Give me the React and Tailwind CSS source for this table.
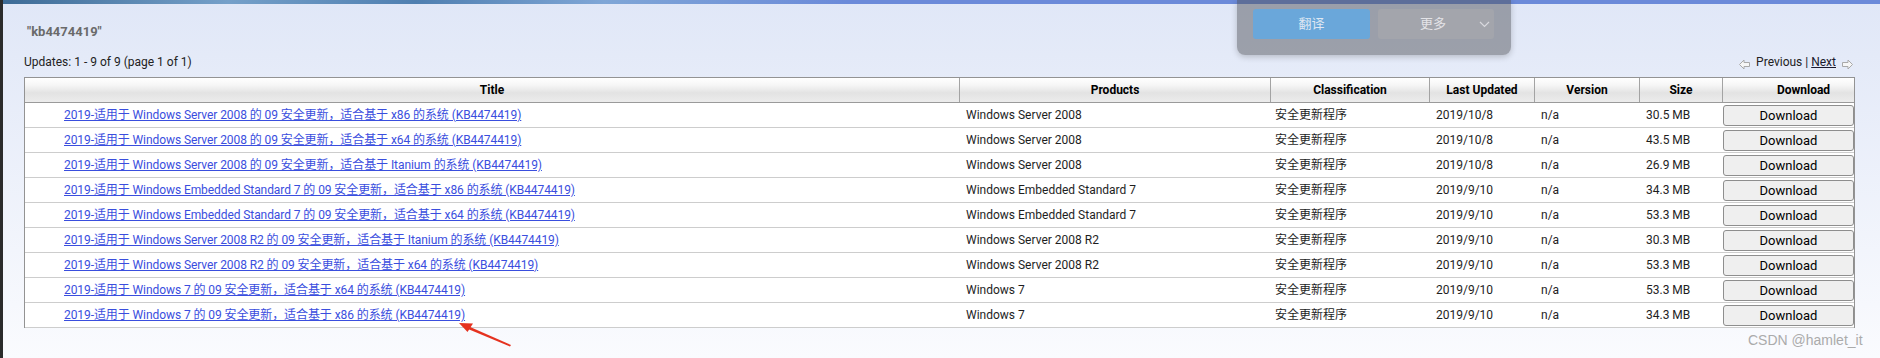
const rows = [
  { prod: "Windows Server 2008", arch: "x86", date: "2019/10/8", size: "30.5 MB" },
  { prod: "Windows Server 2008", arch: "x64", date: "2019/10/8", size: "43.5 MB" },
  { prod: "Windows Server 2008", arch: "Itanium", date: "2019/10/8", size: "26.9 MB" },
  { prod: "Windows Embedded Standard 7", arch: "x86", date: "2019/9/10", size: "34.3 MB" },
  { prod: "Windows Embedded Standard 7", arch: "x64", date: "2019/9/10", size: "53.3 MB" },
  { prod: "Windows Server 2008 R2", arch: "Itanium", date: "2019/9/10", size: "30.3 MB" },
  { prod: "Windows Server 2008 R2", arch: "x64", date: "2019/9/10", size: "53.3 MB" },
  { prod: "Windows 7", arch: "x64", date: "2019/9/10", size: "53.3 MB" },
  { prod: "Windows 7", arch: "x86", date: "2019/9/10", size: "34.3 MB" },
];

const cols = "grid grid-cols-[935px_311px_159px_105px_105px_83px_131px]";

function LeftArrow() {
  return (
    <svg width="11" height="11" viewBox="0 0 11 11" className="mt-[5px]">
      <polygon points="0.5,5.5 5,1 5,3.5 10.5,3.5 10.5,7.5 5,7.5 5,10" fill="#f6f6f6" stroke="#a9a9a9" strokeWidth="1" />
    </svg>
  );
}
function RightArrow() {
  return (
    <svg width="11" height="11" viewBox="0 0 11 11" className="mt-[5px]">
      <polygon points="10.5,5.5 6,1 6,3.5 0.5,3.5 0.5,7.5 6,7.5 6,10" fill="#f6f6f6" stroke="#a9a9a9" strokeWidth="1" />
    </svg>
  );
}

export default function App() {
  return (
    <div className="relative flex h-[358px] w-[1880px] overflow-hidden font-['Roboto','Noto_Sans_CJK_SC',sans-serif]">
      <div className="w-[3px] shrink-0 bg-[#2b2b2b]" />
      <div className="flex flex-1 flex-col bg-gradient-to-b from-[#e0e7f7] to-[#fafbfe]">
        <div className="h-[4px] bg-[linear-gradient(90deg,#3d6b96_0%,#75a0c9_12%,#4f7fb0_22%,#7fa6d6_32%,#6b8ad9_45%,#6b8ad9_100%)]" />
        <div className="pl-[21px] pr-[25px]">
          <div className="mt-[20px] pl-[3px] text-[13px] font-bold leading-[16px] text-[#6a6a6a]">{'"kb4474419"'}</div>
          <div className="mt-[14px] flex items-start justify-between text-[12px] leading-[16px] text-[#222]">
            <div>Updates: 1 - 9 of 9 (page 1 of 1)</div>
            <div className="flex items-start gap-[6px] pr-[2px]">
              <LeftArrow />
              <div>
                Previous | <span className="underline text-[#1a1a2e]">Next</span>
              </div>
              <RightArrow />
            </div>
          </div>
          <div className="mt-[7px] border-x border-t border-[#939393]">
            <div className={`${cols} h-[25px] border-b border-[#9a9a9a] bg-[linear-gradient(to_bottom,#ffffff_0%,#f6f6f6_30%,#e3e3e3_62%,#ececec_100%)] text-[12px] font-bold text-black`}>
              <div className="flex items-center justify-center border-r border-[#a3a3a3]">Title</div>
              <div className="flex items-center justify-center border-r border-[#a3a3a3]">Products</div>
              <div className="flex items-center justify-center border-r border-[#a3a3a3]">Classification</div>
              <div className="flex items-center justify-center border-r border-[#a3a3a3]">Last Updated</div>
              <div className="flex items-center justify-center border-r border-[#a3a3a3]">Version</div>
              <div className="flex items-center justify-center border-r border-[#a3a3a3]">Size</div>
              <div className="flex items-center justify-center pl-[30px]">Download</div>
            </div>
            {rows.map((r, i) => (
              <div key={i} className={`${cols} h-[25px] border-b border-[#cdcdcd] bg-white text-[12px] text-[#1e1e1e]`}>
                <div className="flex items-center pl-[39px]">
                  <a className="tracking-[-0.08px] text-[#3a4ede] underline decoration-[#3a4ede]">
                    {`2019-适用于 ${r.prod} 的 09 安全更新，适合基于 ${r.arch} 的系统 (KB4474419)`}
                  </a>
                </div>
                <div className="flex items-center pl-[6px]">{r.prod}</div>
                <div className="flex items-center pl-[4px]">安全更新程序</div>
                <div className="flex items-center pl-[6px]">{r.date}</div>
                <div className="flex items-center pl-[6px]">n/a</div>
                <div className="flex items-center pl-[6px]">{r.size}</div>
                <div className="flex items-center">
                  <button className="h-[21px] w-full rounded-[3px] border border-[#8e8e8e] bg-[#efefef] text-[13px] leading-none text-black">Download</button>
                </div>
              </div>
            ))}
          </div>
        </div>
      </div>

      {/* translate popup overlay */}
      <div className="absolute left-[1237px] top-0 h-[55px] w-[274px] rounded-b-[8px] bg-[rgba(78,79,86,0.48)] shadow-[0_2px_6px_rgba(0,0,0,0.2)]">
        <div className="absolute left-[16px] top-[9px] flex h-[30px] w-[117px] items-center justify-center rounded-[3px] bg-[#6aa7da] text-[13px] text-[#dfe8f3]">翻译</div>
        <div className="absolute left-[141px] top-[9px] flex h-[30px] w-[116px] items-center rounded-[3px] bg-[#a3a5ac] text-[13px] text-[#e3e3e7]">
          <span className="ml-[42px]">更多</span>
          <svg width="11" height="7" viewBox="0 0 11 7" className="ml-[33px]">
            <polyline points="1,1 5.5,5.5 10,1" fill="none" stroke="#d9d9de" strokeWidth="1.2" />
          </svg>
        </div>
      </div>

      {/* red annotation arrow */}
      <svg className="absolute left-[450px] top-[312px]" width="70" height="40" viewBox="0 0 70 40">
        <polygon points="60,34.5 61,33 19,14.5 18,17" fill="#e5321f" />
        <polygon points="9,11 23,11.5 17.5,20" fill="#e5321f" />
      </svg>

      {/* watermark */}
      <div className="absolute left-[1748px] top-[332px] font-['Liberation_Sans',sans-serif] text-[14px] leading-[17px] text-[#ababab]">CSDN @hamlet_it</div>
    </div>
  );
}
